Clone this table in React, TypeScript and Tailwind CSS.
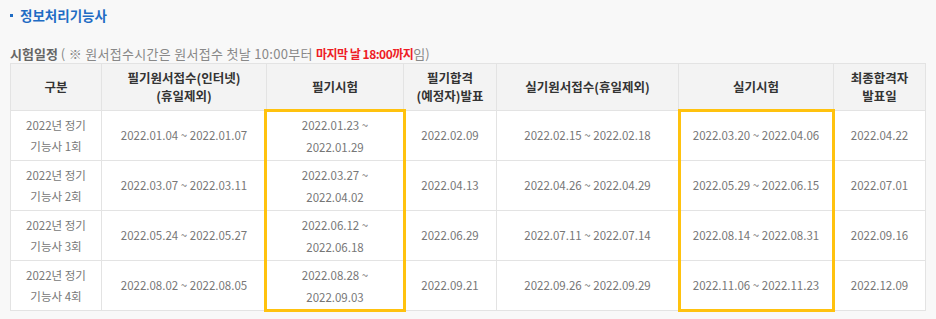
import React from "react";

const rows = [
  { n: "1회", a: "2022.01.04 ~ 2022.01.07", b1: "2022.01.23 ~", b2: "2022.01.29", c: "2022.02.09", d: "2022.02.15 ~ 2022.02.18", e: "2022.03.20 ~ 2022.04.06", f: "2022.04.22" },
  { n: "2회", a: "2022.03.07 ~ 2022.03.11", b1: "2022.03.27 ~", b2: "2022.04.02", c: "2022.04.13", d: "2022.04.26 ~ 2022.04.29", e: "2022.05.29 ~ 2022.06.15", f: "2022.07.01" },
  { n: "3회", a: "2022.05.24 ~ 2022.05.27", b1: "2022.06.12 ~", b2: "2022.06.18", c: "2022.06.29", d: "2022.07.11 ~ 2022.07.14", e: "2022.08.14 ~ 2022.08.31", f: "2022.09.16" },
  { n: "4회", a: "2022.08.02 ~ 2022.08.05", b1: "2022.08.28 ~", b2: "2022.09.03", c: "2022.09.21", d: "2022.09.26 ~ 2022.09.29", e: "2022.11.06 ~ 2022.11.23", f: "2022.12.09" },
];

const th = "border border-[#e3e3e3] bg-[#f3f3f3] text-[12.5px] font-bold text-[#333] leading-[18px] text-center align-middle p-0";
const td = "border border-[#e3e3e3] bg-white text-[11.5px] text-[#777] text-center align-middle p-0 h-[50px]";

export default function App() {
  return (
    <div
      className="w-[936px] h-[319px] bg-[#f8f8f8] overflow-hidden"
      style={{ fontFamily: '"Noto Sans CJK KR", "Noto Sans", sans-serif' }}
    >
      <div className="pl-[10px] pt-[6px] h-[40px] flex items-start">
        <span className="text-[#1f6cc4] text-[13.5px] font-bold leading-[18px] flex items-center">
          <span className="inline-block w-[3px] h-[3px] bg-[#1f6cc4] mr-[7px]"></span>
          정보처리기능사
        </span>
      </div>
      <div className="pl-[10px] h-[23px] flex items-center text-[13px] text-[#888] leading-[18px] pt-[4px] whitespace-pre">
        <span className="font-bold text-[#666]">시험일정 </span>
        <span className="tracking-[0.3px]">( ※ 원서접수시간은 원서접수 첫날 10:00부터 </span>
        <span className="font-bold text-[#ee1c25] text-[12px] tracking-[-0.5px]">마지막 날 18:00까지</span>
        <span>임)</span>
      </div>
      <div className="ml-[10px] relative w-[915px]">
        <table className="border-collapse table-fixed w-[915px]">
          <colgroup>
            <col className="w-[91px]" />
            <col className="w-[165px]" />
            <col className="w-[137px]" />
            <col className="w-[93px]" />
            <col className="w-[182px]" />
            <col className="w-[155px]" />
            <col className="w-[92px]" />
          </colgroup>
          <thead>
            <tr className="h-[47px]">
              <th className={th}>구분</th>
              <th className={th}>필기원서접수(인터넷)<br />(휴일제외)</th>
              <th className={th}>필기시험</th>
              <th className={th}>필기합격<br />(예정자)발표</th>
              <th className={th}>실기원서접수(휴일제외)</th>
              <th className={th}>실기시험</th>
              <th className={th}>최종합격자<br />발표일</th>
            </tr>
          </thead>
          <tbody>
            {rows.map((r) => (
              <tr key={r.n}>
                <td className={td + " leading-[21px]"}>2022년 정기<br />기능사 {r.n}</td>
                <td className={td}>{r.a}</td>
                <td className={td + " leading-[22px]"}>{r.b1}<br />{r.b2}</td>
                <td className={td}>{r.c}</td>
                <td className={td}>{r.d}</td>
                <td className={td}>{r.e}</td>
                <td className={td}>{r.f}</td>
              </tr>
            ))}
          </tbody>
        </table>
        <div className="absolute left-[254px] top-[46px] w-[142px] h-[203px] border-[3px] border-[#ffc20e] pointer-events-none"></div>
        <div className="absolute left-[668px] top-[46px] w-[157px] h-[203px] border-[3px] border-[#ffc20e] pointer-events-none"></div>
      </div>
    </div>
  );
}
